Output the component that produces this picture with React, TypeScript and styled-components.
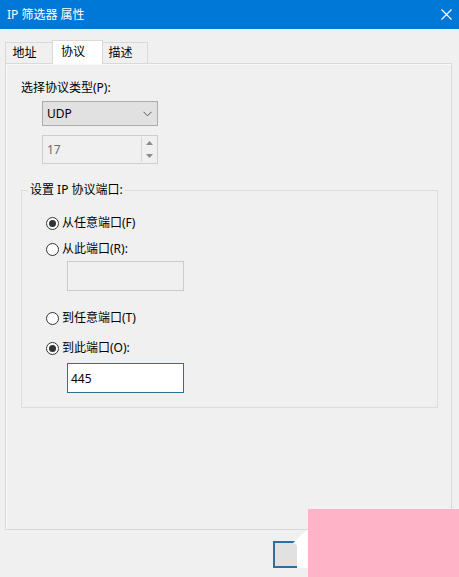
import styled, { createGlobalStyle } from 'styled-components'

const GlobalStyle = createGlobalStyle`
  html, body {
    margin: 0;
    padding: 0;
  }
  body {
    width: 459px;
    height: 577px;
    overflow: hidden;
    background: #f0f0f0;
    font-family: "Noto Sans", "Noto Sans CJK SC", sans-serif;
    font-size: 12px;
    color: #000;
  }
  * {
    box-sizing: border-box;
  }
`

const Window = styled.div`
  position: relative;
  width: 459px;
  height: 577px;
  display: flex;
  flex-direction: column;
`

const TitleBar = styled.div`
  height: 29px;
  flex: none;
  background: #0078d7;
  color: #fff;
  display: flex;
  align-items: center;
  justify-content: space-between;
  padding: 0 7px 0 7px;
  font-size: 12px;
  line-height: 16px;
`

const Body = styled.div`
  padding: 11px 7px 0 5px;
`

const TabRow = styled.div`
  display: flex;
  align-items: flex-end;
  height: 24px;
  margin-bottom: -1px;
  position: relative;
  z-index: 1;
`

const Tab = styled.div<{ $active?: boolean; $w: number }>`
  width: ${p => p.$w}px;
  height: ${p => (p.$active ? 24 : 22)}px;
  border: 1px solid #d9d9d9;
  border-bottom: ${p => (p.$active ? 'none' : '1px solid #d9d9d9')};
  background: ${p => (p.$active ? '#fff' : '#f0f0f0')};
  margin-left: -1px;
  padding-right: 9px;
  display: flex;
  align-items: center;
  justify-content: center;
  padding-bottom: ${p => (p.$active ? 2 : 0)}px;
  line-height: 16px;

  &:first-child {
    margin-left: 0;
  }
`

const Panel = styled.div`
  height: 467px;
  border: 1px solid #d9d9d9;
  box-shadow: inset 1px 1px 0 #fafafa;
  padding: 16px 13px 0 15px;
`

const Label = styled.div`
  line-height: 16px;
  height: 16px;
`

const Select = styled.div`
  margin: 5px 0 0 21px;
  width: 116px;
  height: 25px;
  background: #e1e1e1;
  border: 1px solid #adadad;
  display: flex;
  align-items: center;
  justify-content: space-between;
  padding: 0 5px 0 4px;
  font-size: 12px;
`

const Spin = styled.div`
  margin: 9px 0 0 21px;
  width: 116px;
  height: 29px;
  background: #f0f0f0;
  border: 1px solid #cfcfcf;
  display: flex;
  color: #6d6d6d;
`

const SpinText = styled.div`
  flex: 1;
  display: flex;
  align-items: center;
  padding-left: 4px;
`

const SpinButtons = styled.div`
  width: 15px;
  margin: 1px 1px 1px 0;
  border-left: 1px solid #d9d9d9;
  display: flex;
  flex-direction: column;
`

const SpinHalf = styled.div`
  flex: 1;
  display: flex;
  align-items: center;
  justify-content: center;
`

const Group = styled.fieldset`
  margin: 18px 0 0 0;
  padding: 0;
  min-width: 0;
  border: 1px solid #dcdcdc;
`

const Legend = styled.legend`
  margin-left: 6px;
  padding: 0 2px;
  line-height: 16px;
`

const Options = styled.div`
  display: flex;
  flex-direction: column;
  align-items: flex-start;
  padding: 17px 0 14px 24px;
`

const RadioRow = styled.div<{ $gap: number }>`
  margin-top: ${p => p.$gap}px;
  display: flex;
  align-items: center;
  gap: 3px;
  height: 16px;
  line-height: 16px;
`

const RadioCircle = styled.span<{ $checked?: boolean }>`
  width: 13px;
  height: 13px;
  border: 1px solid #333;
  border-radius: 50%;
  background: #fff;
  display: flex;
  align-items: center;
  justify-content: center;

  &::after {
    content: '';
    width: 7px;
    height: 7px;
    border-radius: 50%;
    background: ${p => (p.$checked ? '#333' : 'transparent')};
  }
`

const PortBox = styled.div<{ $disabled?: boolean; $gap: number }>`
  margin: ${p => p.$gap}px 0 0 21px;
  width: 117px;
  height: 30px;
  border: 1px solid ${p => (p.$disabled ? '#cccccc' : '#2a7396')};
  background: ${p => (p.$disabled ? '#f0f0f0' : '#fff')};
  display: flex;
  align-items: center;
  padding-left: 3px;
  font-size: 12px;
`

const Footer = styled.div`
  display: flex;
  justify-content: flex-end;
  padding: 11px 104px 0 0;
`

const Button = styled.div`
  width: 75px;
  height: 27px;
  border: 2px solid #2d70a0;
  background: #e1e1e1;
  display: flex;
  align-items: center;
  justify-content: center;
`

const Watermark = styled.div`
  position: absolute;
  left: 308px;
  top: 509px;
  right: 0;
  bottom: 0;
  background: #ffb3c7;
`

const WatermarkTip = styled.svg`
  position: absolute;
  left: 288px;
  top: 528px;
`

function Radio({ checked, label, gap }: { checked?: boolean; label: string; gap: number }) {
  return (
    <RadioRow $gap={gap}>
      <RadioCircle $checked={checked} />
      <span>{label}</span>
    </RadioRow>
  )
}

export default function App() {
  return (
    <Window>
      <GlobalStyle />
      <TitleBar>
        <span>IP 筛选器 属性</span>
        <svg width="11" height="11" viewBox="0 0 11 11">
          <path d="M0.5 0.5 L10.5 10.5 M10.5 0.5 L0.5 10.5" stroke="#fff" strokeWidth="1.1" />
        </svg>
      </TitleBar>
      <Body>
        <TabRow>
          <Tab $w={48}>地址</Tab>
          <Tab $w={51} $active>协议</Tab>
          <Tab $w={46}>描述</Tab>
        </TabRow>
        <Panel>
          <Label>选择协议类型(P):</Label>
          <Select>
            <span>UDP</span>
            <svg width="9" height="6" viewBox="0 0 9 6">
              <path d="M0.5 0.8 L4.5 4.8 L8.5 0.8" fill="none" stroke="#555" strokeWidth="1" />
            </svg>
          </Select>
          <Spin>
            <SpinText>17</SpinText>
            <SpinButtons>
              <SpinHalf>
                <svg width="7" height="4" viewBox="0 0 7 4">
                  <path d="M0 4 L3.5 0 L7 4 Z" fill="#8a8a8a" />
                </svg>
              </SpinHalf>
              <SpinHalf>
                <svg width="7" height="4" viewBox="0 0 7 4">
                  <path d="M0 0 L3.5 4 L7 0 Z" fill="#8a8a8a" />
                </svg>
              </SpinHalf>
            </SpinButtons>
          </Spin>
          <Group>
            <Legend>设置 IP 协议端口:</Legend>
            <Options>
              <Radio checked label="从任意端口(F)" gap={0} />
              <Radio label="从此端口(R):" gap={10} />
              <PortBox $disabled $gap={4} />
              <Radio label="到任意端口(T)" gap={19} />
              <Radio checked label="到此端口(O):" gap={14} />
              <PortBox $gap={7}>445</PortBox>
            </Options>
          </Group>
        </Panel>
        <Footer>
          <Button>确定</Button>
        </Footer>
      </Body>
      <Watermark />
      <WatermarkTip width="21" height="41" viewBox="0 0 21 41">
        <path d="M5 15 L19 2 L20 2 L20 40 L9 40 L9 17 Z" fill="#fff" />
      </WatermarkTip>
    </Window>
  )
}
